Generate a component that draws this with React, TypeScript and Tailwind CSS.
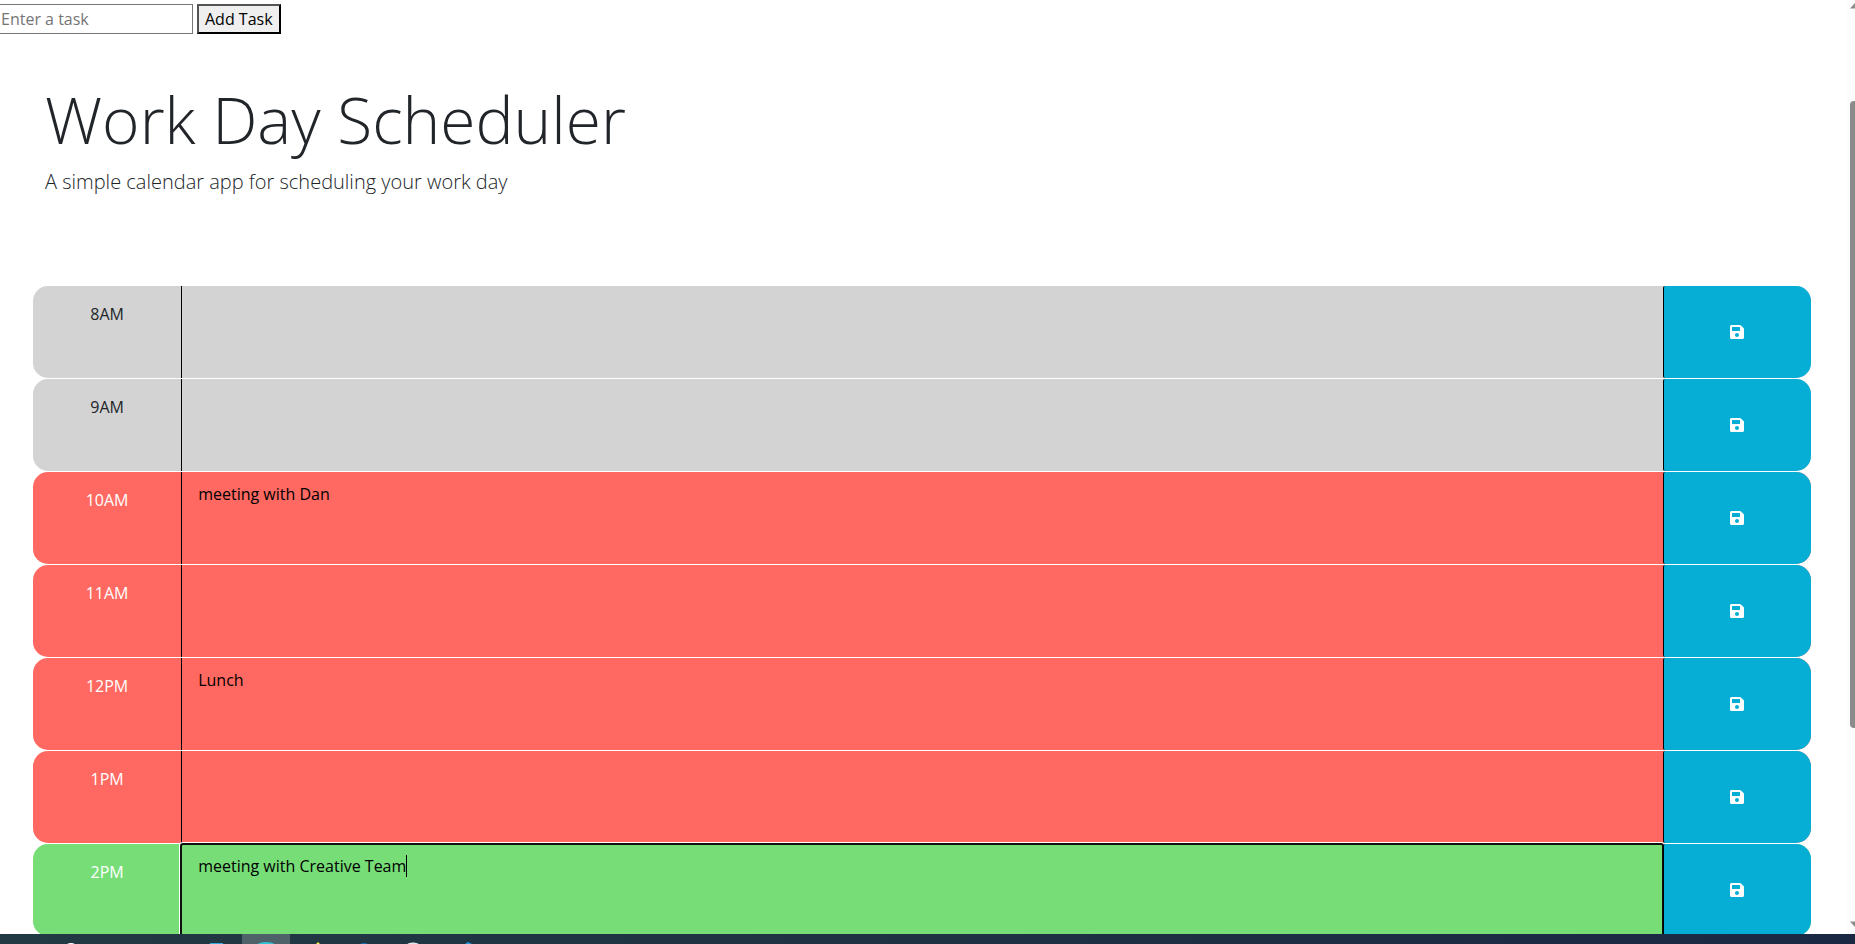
import { FaSave } from "react-icons/fa";

type Phase = "past" | "present" | "future";

interface Slot {
  hour: string;
  task: string;
  phase: Phase;
  editing?: boolean;
}

const slots: Slot[] = [
  { hour: "8AM", task: "", phase: "past" },
  { hour: "9AM", task: "", phase: "past" },
  { hour: "10AM", task: "meeting with Dan", phase: "present" },
  { hour: "11AM", task: "", phase: "present" },
  { hour: "12PM", task: "Lunch", phase: "present" },
  { hour: "1PM", task: "", phase: "present" },
  { hour: "2PM", task: "meeting with Creative Team", phase: "future", editing: true },
];

const phaseStyles: Record<Phase, string> = {
  past: "bg-[#d3d3d3] text-[#212529]",
  present: "bg-[#ff6961] text-white",
  future: "bg-[#77dd77] text-white",
};

function TaskForm() {
  return (
    <form className="flex gap-1 pt-1" onSubmit={(e) => e.preventDefault()}>
      <input
        type="text"
        aria-label="Task"
        placeholder="Enter a task"
        className="h-[30px] w-[193px] border border-l-0 border-[#767676] bg-white px-px text-black placeholder:text-[#757575]"
      />
      <button
        type="submit"
        className="h-[30px] border-2 border-t-[#545454] border-r-black border-b-black border-l-[#545454] bg-[#efefef] px-1.5 leading-6 text-black"
      >
        Add Task
      </button>
    </form>
  );
}

function TimeBlock({ slot }: { slot: Slot }) {
  const id = "task-" + slot.hour;
  return (
    <div className={"mb-px grid h-[92px] grid-cols-12 rounded-[15px] " + phaseStyles[slot.phase]}>
      <label htmlFor={id} className="pt-4 text-center">
        {slot.hour}
      </label>
      <div className="relative col-span-10">
        <textarea
          id={id}
          defaultValue={slot.task}
          className={
            "block h-full w-full resize-none border-l border-black px-4 pt-2.5 text-black " +
            (slot.editing
              ? "rounded-xs outline-2 -outline-offset-1 outline-[#101010] ring-2 ring-white"
              : "outline-none")
          }
        />
        {slot.editing && <span className="absolute top-[11px] left-[225px] h-[22px] w-px bg-black" />}
      </div>
      <button
        type="button"
        aria-label={"Save " + slot.hour}
        className="relative flex items-center justify-center rounded-l-xs rounded-r-[15px] border-l border-black bg-[#06aed5] text-white"
      >
        <FaSave size={16} />
      </button>
    </div>
  );
}

function ScrollTrack() {
  return (
    <div className="flex w-2 shrink-0 flex-col items-end overflow-hidden bg-[#fcfcfc]">
      <svg className="mt-0.5 h-[7px] w-[5px]" viewBox="0 0 5 7">
        <path d="M0 6.5 5 1v5.5z" fill="#8b8b8b" />
      </svg>
      <div className="mt-[92px] h-[627px] w-[5px] rounded-l bg-[#8b8b8b]" />
      <svg className="mt-auto mb-1.5 h-[7px] w-[5px]" viewBox="0 0 5 7">
        <path d="M0 .5 5 6V.5z" fill="#8b8b8b" />
      </svg>
    </div>
  );
}

function Taskbar() {
  return (
    <footer className="h-2.5 shrink-0 bg-linear-to-r from-[#223a43] to-[#1b2843]">
      <svg className="h-2.5 w-[600px]" viewBox="0 0 600 10">
        <rect x="242" width="48" height="10" fill="#4f626a" />
        <ellipse cx="71" cy="11" rx="4" ry="2" fill="#fff" />
        <rect x="210" y="9" width="13" height="1" fill="#35a9dd" />
        <ellipse cx="266" cy="12" rx="10" ry="4" fill="#31c3d5" />
        <path d="m316 10 2-2 2 2z" fill="#f5e94b" />
        <ellipse cx="364" cy="11" rx="4" ry="2" fill="#1670b8" />
        <ellipse cx="413" cy="11" rx="6" ry="2.5" fill="#e4e8ed" />
        <path d="m465 10 3-2 4 2z" fill="#239be0" />
      </svg>
    </footer>
  );
}

export default function App() {
  return (
    <div className="flex h-screen flex-col overflow-hidden bg-white font-['Open_Sans',sans-serif] text-base leading-6 text-[#212529]">
      <div className="flex min-h-0 flex-1">
        <main className="min-w-0 flex-1 overflow-hidden">
          <TaskForm />
          <header className="px-[45px] pt-12 pb-20">
            <h1 className="mb-2.5 text-[64px] leading-[75px] font-light">Work Day Scheduler</h1>
            <p className="text-xl leading-[30px] font-light">A simple calendar app for scheduling your work day</p>
          </header>
          <section aria-label="Schedule" className="pt-[9px] pr-9 pl-[33px]">
            {slots.map((slot) => (
              <TimeBlock key={slot.hour} slot={slot} />
            ))}
          </section>
        </main>
        <ScrollTrack />
      </div>
      <Taskbar />
    </div>
  );
}
